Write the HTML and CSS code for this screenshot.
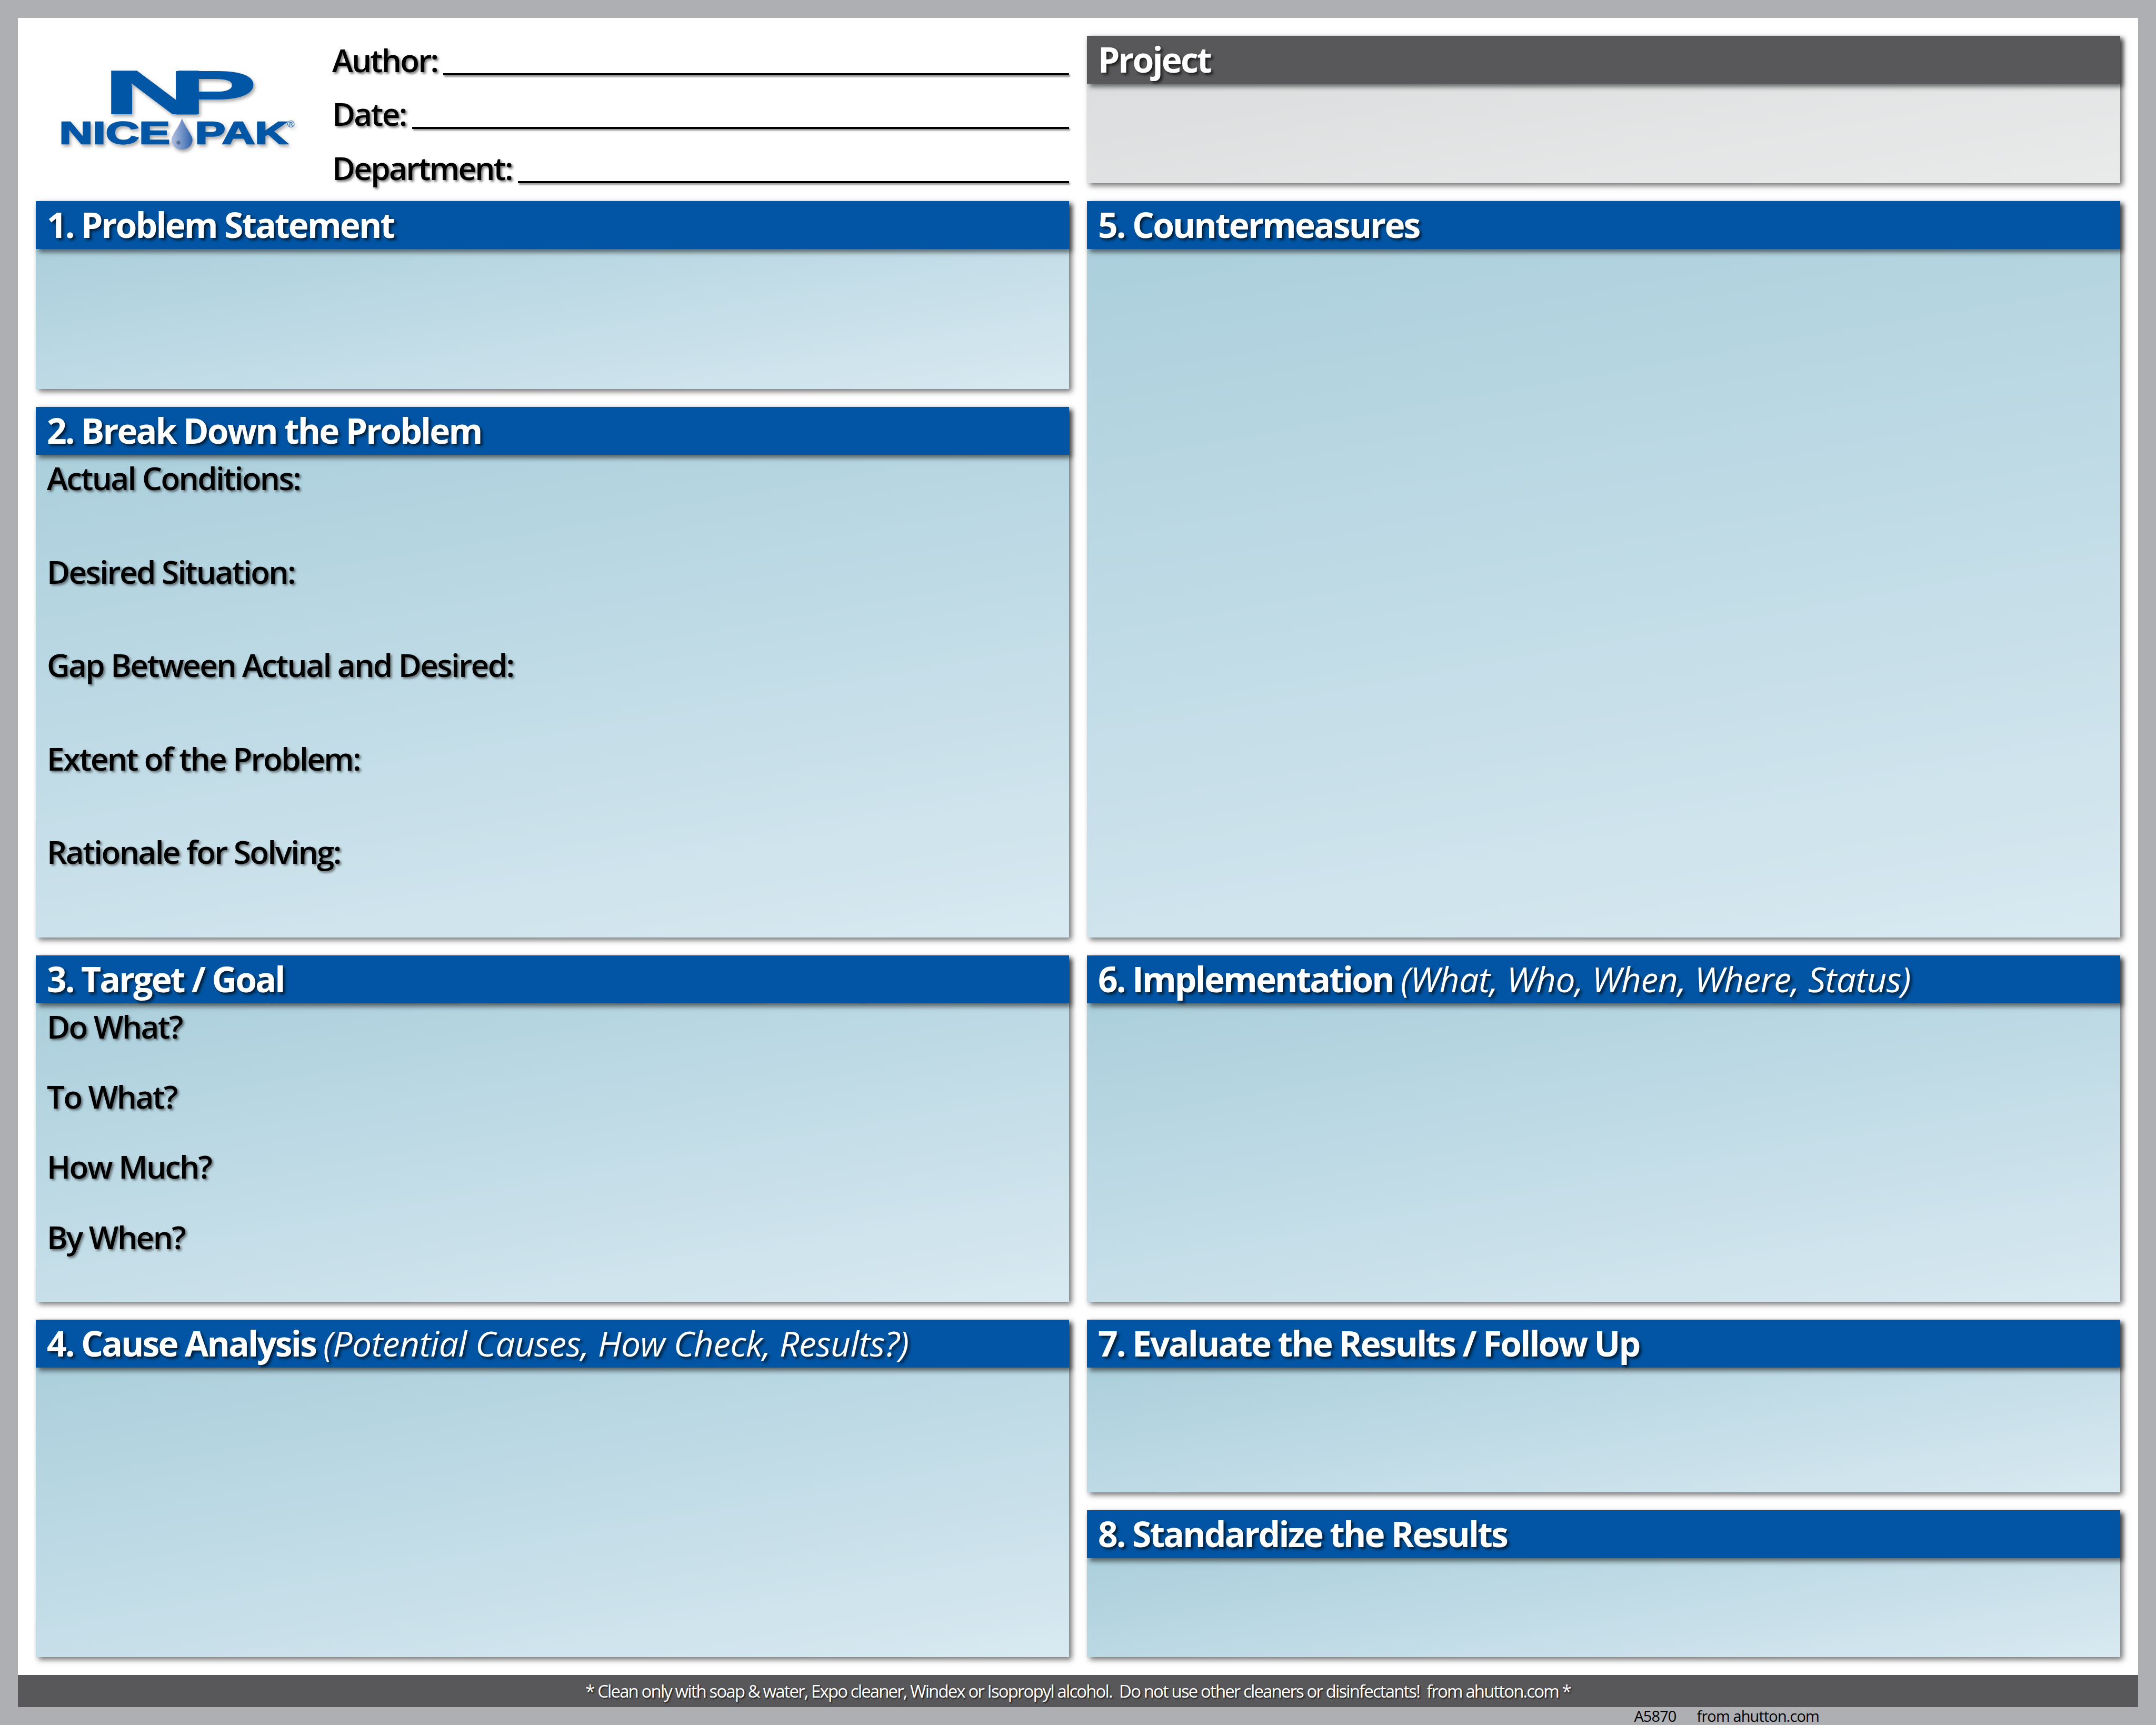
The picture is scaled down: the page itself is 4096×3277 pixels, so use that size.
FILE: index.html
```html
<!DOCTYPE html>
<html lang="en">
<head>
<meta charset="utf-8">
<title>A3 Problem Solving Board</title>
<link rel="stylesheet" href="styles.css">
</head>
<body>
<div class="sheet">
  <main class="board">
    <header class="masthead">
      <svg class="logo" viewBox="0 0 520 295" role="img" aria-label="Nice-Pak">
        <defs>
          <linearGradient id="drop" x1="0" x2="1" y1="0" y2="0">
            <stop offset="0" stop-color="#b3c1e0"/>
            <stop offset="1" stop-color="#2f62ac"/>
          </linearGradient>
        </defs>
        <g class="logo-mark">
          <text class="logo-np" x="134" y="156" textLength="210" lengthAdjust="spacingAndGlyphs">N</text>
          <text class="logo-np" x="265" y="156" textLength="178" lengthAdjust="spacingAndGlyphs">P</text>
          <text class="logo-word" x="47" y="216" textLength="222" lengthAdjust="spacingAndGlyphs">NICE</text>
          <text class="logo-word" x="319" y="216" textLength="186" lengthAdjust="spacingAndGlyphs">PAK</text>
          <text class="logo-reg" x="504" y="183">®</text>
          <path d="M293 165 C298 182 314 198 314 208 C314 220 304 228 293 228 C282 228 272 220 272 208 C272 198 288 182 293 165 Z" fill="url(#drop)"/>
          <circle cx="286" cy="214" r="4" fill="#5b6f94"/>
        </g>
      </svg>
      <div class="fields">
        <div class="field"><span class="label">Author:</span><span class="rule"></span></div>
        <div class="field"><span class="label">Date:</span><span class="rule"></span></div>
        <div class="field"><span class="label">Department:</span><span class="rule"></span></div>
      </div>
    </header>

    <section class="panel panel-project">
      <h2 class="bar bar-grey">Project</h2>
      <div class="body body-grey"></div>
    </section>

    <section class="panel">
      <h2 class="bar">1. Problem Statement</h2>
      <div class="body"></div>
    </section>

    <section class="panel panel-tall">
      <h2 class="bar">5. Countermeasures</h2>
      <div class="body"></div>
    </section>

    <section class="panel">
      <h2 class="bar">2. Break Down the Problem</h2>
      <div class="body prompts prompts-wide">
        <p class="prompt">Actual Conditions:</p>
        <p class="prompt">Desired Situation:</p>
        <p class="prompt">Gap Between Actual and Desired:</p>
        <p class="prompt">Extent of the Problem:</p>
        <p class="prompt">Rationale for Solving:</p>
      </div>
    </section>

    <section class="panel">
      <h2 class="bar">3. Target / Goal</h2>
      <div class="body prompts prompts-tight">
        <p class="prompt">Do What?</p>
        <p class="prompt">To What?</p>
        <p class="prompt">How Much?</p>
        <p class="prompt">By When?</p>
      </div>
    </section>

    <section class="panel">
      <h2 class="bar">6. Implementation <em class="aside">(What, Who, When, Where, Status)</em></h2>
      <div class="body"></div>
    </section>

    <section class="panel panel-cause">
      <h2 class="bar">4. Cause Analysis <em class="aside">(Potential Causes, How Check, Results?)</em></h2>
      <div class="body"></div>
    </section>

    <section class="panel">
      <h2 class="bar">7. Evaluate the Results / Follow Up</h2>
      <div class="body"></div>
    </section>

    <section class="panel">
      <h2 class="bar">8. Standardize the Results</h2>
      <div class="body"></div>
    </section>
  </main>
  <footer class="notice">* Clean only with soap &amp; water, Expo cleaner, Windex or Isopropyl alcohol.&nbsp; Do not use other cleaners or disinfectants!&nbsp; from ahutton.com *</footer>
  <div class="credit"><span>A5870</span><span>from ahutton.com</span></div>
</div>
</body>
</html>
```
FILE: styles.css
```css
* { box-sizing: border-box; }

html, body {
  margin: 0;
  height: 100%;
}

body {
  background: #aeafb3;
  overflow: hidden;
  font-family: "Open Sans", "Liberation Sans", sans-serif;
}

.sheet {
  width: 4096px;
  height: 3277px;
  padding: 34px 34px 0;
  display: flex;
  flex-direction: column;
}

.board {
  background: #fff;
  height: 3148px;
  padding: 34px;
  display: grid;
  grid-template-columns: 1963px 1963px;
  grid-template-rows: 280px 357px 1008px 658px 328px 279px;
  gap: 34px;
}

.masthead {
  display: flex;
  align-items: flex-start;
}

.logo {
  flex: none;
  width: 493px;
  height: 280px;
  margin-right: 70px;
  overflow: visible;
  filter: drop-shadow(3px 4px 3px rgba(0, 0, 0, .35));
}

.logo-np {
  font-family: "Liberation Sans", sans-serif;
  font-weight: 700;
  font-size: 124px;
  fill: #0256a6;
  stroke: #0256a6;
  stroke-width: 2px;
}

.logo-word {
  font-family: "Liberation Sans", sans-serif;
  font-weight: 700;
  font-size: 63px;
  fill: #0256a6;
  stroke: #0256a6;
  stroke-width: 2.5px;
}

.logo-reg {
  font-family: "Liberation Sans", sans-serif;
  font-size: 20px;
  fill: #0256a6;
}

.fields {
  flex: 1;
  display: flex;
  flex-direction: column;
  gap: 21.4px;
}

.field {
  height: 81px;
  display: flex;
  align-items: flex-end;
  gap: 11px;
}

.label {
  font-size: 60px;
  font-weight: 600;
  line-height: 1;
  letter-spacing: -2.6px;
  margin-bottom: 5px;
  color: #000;
  text-shadow: 3px 3px 4px rgba(0, 0, 0, .55);
}

.rule {
  flex: 1;
  height: 4px;
  background: #000;
  margin-bottom: 6px;
  box-shadow: 2px 3px 3px rgba(0, 0, 0, .45);
}

.panel {
  display: flex;
  flex-direction: column;
  min-width: 0;
  box-shadow: 5px 5px 10px rgba(0, 0, 0, .55);
}

.panel-tall { grid-row: span 2; }
.panel-cause { grid-row: span 2; }

.bar {
  flex: none;
  height: 91px;
  margin: 0;
  padding: 0 21px;
  background: #0255a4;
  color: #fff;
  font-size: 66px;
  font-weight: 700;
  line-height: 88px;
  letter-spacing: -2.9px;
  white-space: nowrap;
  text-shadow: 4px 4px 5px rgba(0, 0, 0, .65);
  box-shadow: 5px 6px 9px rgba(0, 0, 0, .55);
  position: relative;
}

.bar-grey { background: #58585a; }

.aside {
  font-weight: 400;
  font-style: italic;
  letter-spacing: -.6px;
}

.body {
  flex: 1;
  background: linear-gradient(170deg, #abcfdc 0%, #d8e9f1 100%);
}

.body-grey {
  background: linear-gradient(170deg, #dcddde 0%, #e9eaea 100%);
}

.prompts {
  padding: 0 21px;
  display: flex;
  flex-direction: column;
}

.prompt {
  margin: 0;
  color: #000;
  font-size: 60px;
  font-weight: 600;
  line-height: 1;
  letter-spacing: -2.5px;
  text-shadow: 3px 3px 4px rgba(0, 0, 0, .5);
  flex: none;
}

.prompts-wide { padding-top: 14px; gap: 117.6px; }
.prompts-tight { padding-top: 14px; gap: 73.2px; }

.notice {
  height: 61px;
  background: #58585a;
  color: #fff;
  text-align: center;
  font-size: 33px;
  line-height: 61px;
  letter-spacing: -1.9px;
  white-space: nowrap;
  text-shadow: 2px 2px 3px rgba(0, 0, 0, .7);
}

.credit {
  height: 34px;
  padding-right: 606px;
  display: flex;
  justify-content: flex-end;
  gap: 39px;
  font-size: 29px;
  line-height: 34px;
  letter-spacing: -.9px;
  color: #000;
}
```
